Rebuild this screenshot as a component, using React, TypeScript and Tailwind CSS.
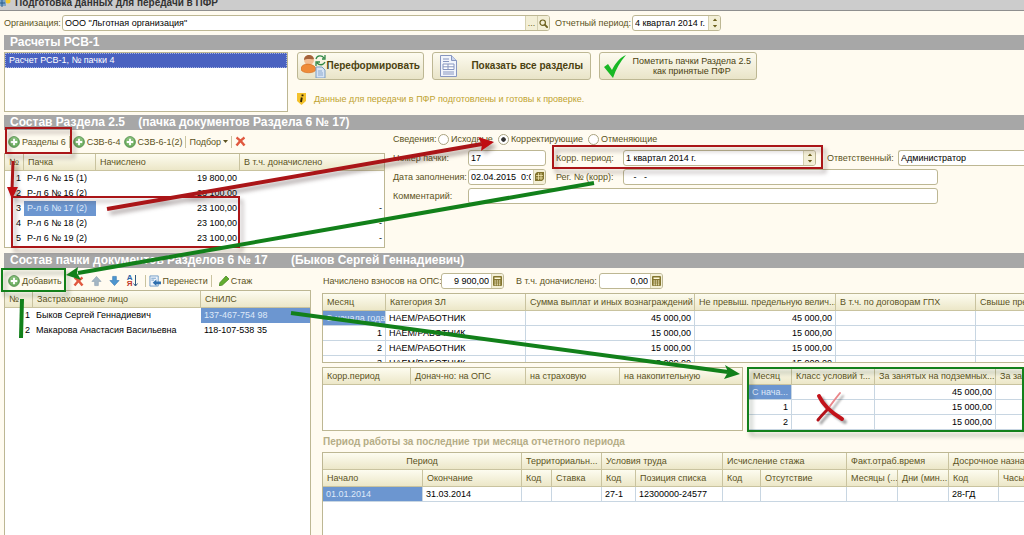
import type { ReactNode } from 'react';
import clsx from 'clsx';

type Column = { title: string; width: string; right?: boolean };

const packColumns: Column[] = [
  { title: '№', width: 'w-[19px]', right: true },
  { title: 'Пачка', width: 'w-[72px]' },
  { title: 'Начислено', width: 'w-[144px]', right: true },
  { title: 'В т.ч. доначислено', width: 'w-[145px]', right: true },
];

const packRows = [
  ['1', 'Р-л 6 № 15 (1)', '19 800,00', ''],
  ['2', 'Р-л 6 № 16 (2)', '23 100,00', ''],
  ['3', 'Р-л 6 № 17 (2)', '23 100,00', '-'],
  ['4', 'Р-л 6 № 18 (2)', '23 100,00', '-'],
  ['5', 'Р-л 6 № 19 (2)', '23 100,00', '-'],
];

const personColumns: Column[] = [
  { title: '№', width: 'w-[28px]', right: true },
  { title: 'Застрахованное лицо', width: 'w-[168px]' },
  { title: 'СНИЛС', width: 'w-[110px]' },
];

const personRows = [
  ['1', 'Быков Сергей Геннадиевич', '137-467-754 98'],
  ['2', 'Макарова Анастасия Васильевна', '118-107-538 35'],
];

const paymentColumns: Column[] = [
  { title: 'Месяц', width: 'w-[63px]', right: true },
  { title: 'Категория ЗЛ', width: 'w-[140px]' },
  { title: 'Сумма выплат и иных вознаграждений', width: 'w-[169px]', right: true },
  { title: 'Не превыш. предельную велич...', width: 'w-[141px]', right: true },
  { title: 'В т.ч. по договорам ГПХ', width: 'w-[140px]', right: true },
  { title: 'Свыше пред', width: 'w-[140px]', right: true },
];

const paymentRows = [
  ['С начала года', 'НАЕМ/РАБОТНИК', '45 000,00', '45 000,00', '', ''],
  ['1', 'НАЕМ/РАБОТНИК', '15 000,00', '15 000,00', '', ''],
  ['2', 'НАЕМ/РАБОТНИК', '15 000,00', '15 000,00', '', ''],
  ['3', 'НАЕМ/РАБОТНИК', '15 000,00', '15 000,00', '', ''],
];

const corrColumns: Column[] = [
  { title: 'Корр.период', width: 'w-[88px]' },
  { title: 'Донач-но: на ОПС', width: 'w-[115px]' },
  { title: 'на страховую', width: 'w-[94px]' },
  { title: 'на накопительную', width: 'w-[124px]' },
];

const tariffColumns: Column[] = [
  { title: 'Месяц', width: 'w-[43px]', right: true },
  { title: 'Класс условий т...', width: 'w-[83px]' },
  { title: 'За занятых на подземных...', width: 'w-[121px]', right: true },
  { title: 'За зан', width: 'w-[121px]', right: true },
];

const tariffRows = [
  ['С нача...', '', '45 000,00', ''],
  ['1', '', '15 000,00', ''],
  ['2', '', '15 000,00', ''],
];

const headCell =
  'h-[17px] overflow-hidden whitespace-nowrap border-r border-b border-[#c9c39f] bg-linear-to-b from-[#fdfcf0] to-[#ece7c8] px-1 font-normal leading-4 text-[#5c5322]';

function Grid({ columns, rows, selected, lines, label }: { columns: Column[]; rows: string[][]; selected?: string; lines?: boolean; label: string }) {
  return (
    <table aria-label={label} className="w-0 table-fixed border-separate border-spacing-0">
      <thead>
        <tr>
          {columns.map((c) => (
            <th key={c.title} className={clsx(headCell, 'text-left', c.width)}>{c.title}</th>
          ))}
        </tr>
      </thead>
      <tbody>
        {rows.map((row, r) => (
          <tr key={r}>
            {row.map((value, c) => (
              <td
                key={c}
                className={clsx(
                  'h-[15px] overflow-hidden whitespace-nowrap px-[3px] leading-[14px]',
                  lines ? 'border-r border-b border-[#c8d6e2]' : 'border-b border-transparent',
                  columns[c].right && 'text-right',
                  selected === `${r}:${c}` ? 'bg-[#6c96d0] text-[#dfe9f8]' : 'text-black',
                )}
              >
                {value}
              </td>
            ))}
          </tr>
        ))}
      </tbody>
    </table>
  );
}

function SectionBar({ children }: { children: ReactNode }) {
  return (
    <h2 className="h-[15px] overflow-hidden whitespace-pre bg-[#a7a7a7] pl-[6px] text-[12px] font-bold leading-[15px] text-white">
      {children}
    </h2>
  );
}

const fieldBox = 'flex h-4 items-stretch overflow-hidden rounded-[3px] border border-[#bdb793] bg-white';
const fieldInput = 'min-w-0 flex-1 bg-transparent px-[2px] text-black outline-none';
const fieldButton = 'flex w-3 shrink-0 items-center justify-center border-l border-[#d5d0b0] bg-[#f3efd6] text-[#6b5f1c]';

function Spinner() {
  return (
    <button type="button" aria-label="Изменить период" className={fieldButton}>
      <svg width="6" height="10" viewBox="0 0 6 10" fill="currentColor">
        <path d="M3 0.5 5.2 3H0.8zM3 9.5 0.8 7h4.4z" />
      </svg>
    </button>
  );
}

function Calculator() {
  return (
    <button type="button" aria-label="Калькулятор" className={fieldButton}>
      <svg width="9" height="10" viewBox="0 0 9 10">
        <rect width="9" height="10" rx="1" fill="#83752f" />
        <path d="M1.5 2.2h6" stroke="#fff9d8" strokeWidth="1.4" />
        <path d="M1.5 5h6M1.5 7h6M1.5 8.8h6" stroke="#fff9d8" strokeDasharray="1.4 .8" />
      </svg>
    </button>
  );
}

function PlusIcon() {
  return (
    <svg width="12" height="12" viewBox="0 0 12 12">
      <circle cx="6" cy="6" r="5.4" fill="#6fae62" stroke="#4c8a49" strokeWidth=".8" />
      <circle cx="6" cy="5" r="4" fill="#96c888" opacity=".6" />
      <path d="M6 2.8v6.4M2.8 6h6.4" stroke="#fff" strokeWidth="1.9" />
    </svg>
  );
}

function DeleteIcon() {
  return (
    <svg width="11" height="11" viewBox="0 0 11 11">
      <path d="M1.5 1.5c3 2 5.5 4.5 8 8M9.5 1.5c-3 2-5.5 4.5-8 8" stroke="#e0583f" strokeWidth="2.4" fill="none" />
    </svg>
  );
}

function ArrowIcon({ down }: { down?: boolean }) {
  return (
    <svg width="11" height="12" viewBox="0 0 12 12">
      <path
        d={down ? 'M4 1h4v4.5h3L6 11 1 5.5h3z' : 'M4 11h4V6.5h3L6 1 1 6.5h3z'}
        fill={down ? '#4d96cf' : '#a3b6c4'}
        stroke={down ? '#3579b4' : '#8da1b1'}
        strokeWidth=".7"
      />
    </svg>
  );
}

function Tool({ children }: { children: ReactNode }) {
  return <button type="button" className="flex shrink-0 items-center gap-[2px] whitespace-nowrap text-[#5c5322]">{children}</button>;
}

function Separator() {
  return <span className="h-3 border-l border-[#c9c39f]" />;
}

const bigButton =
  'flex h-7 shrink-0 items-center whitespace-nowrap rounded-[3px] border border-[#bdb793] bg-linear-to-b from-[#fdfbf0] to-[#e9e4c8] text-[#4b4210]';

// red and green marks drawn over the form
function Annotations() {
  return (
    <svg aria-hidden="true" className="pointer-events-none absolute top-0 left-0" width="1024" height="535" viewBox="0 0 1024 535" fill="none">
      <g className="drop-shadow-[3px_4px_2px_rgba(60,40,40,0.4)]" stroke="#aa1518" strokeWidth="2">
        <rect x="6" y="128" width="65" height="25" />
        <rect x="12" y="197" width="227" height="50" />
        <rect x="553" y="146" width="269" height="22" />
        <path d="M13 161 12 190" strokeWidth="3" />
        <path d="M7 187h11l-6 12z" fill="#c00d12" strokeWidth="0" />
        <path d="M107 209 482 144" strokeWidth="4" />
        <path d="M494 142 478 137l4 7-1 7z" fill="#c00d12" strokeWidth="0" />
      </g>
      <g stroke="#12801a">
        <g className="drop-shadow-[3px_4px_2px_rgba(40,60,40,0.4)]" strokeWidth="2">
          <rect x="2" y="269" width="63" height="22" />
          <rect x="748" y="368" width="275" height="63" />
        </g>
        <path d="M22 299 21 338" strokeWidth="4" />
        <path d="M594 183 78 273M291 313 728 372" strokeWidth="4" />
        <path d="M66 275 78 267l-1 6 4 7zM740 374 725 365l3 7-4 7z" fill="#12801a" strokeWidth="0" />
      </g>
      <g className="drop-shadow-[3px_3px_1px_rgba(0,0,0,0.35)]" strokeLinecap="round">
        <path d="M840 393C836 398 832 403 828 409" stroke="#e9868a" strokeWidth="2" />
        <path d="M828 409C824 413 821 416 818 420" stroke="#b3131b" strokeWidth="3" />
        <path d="M819 396C823 405 832 413 842 419" stroke="#c3131b" strokeWidth="4" />
      </g>
    </svg>
  );
}

const periodGroups = ['Период', 'Территориальн...', 'Условия труда', 'Исчисление стажа', 'Факт.отраб.время', 'Досрочное назнач'];

const periodColumns = [
  { title: 'Начало', width: 'w-[100px]', value: '01.01.2014' },
  { title: 'Окончание', width: 'w-[99px]', value: '31.03.2014' },
  { title: 'Код', width: 'w-[30px]', value: '' },
  { title: 'Ставка', width: 'w-[50px]', value: '' },
  { title: 'Код', width: 'w-[34px]', value: '27-1' },
  { title: 'Позиция списка', width: 'w-[87px]', value: '12300000-24577' },
  { title: 'Код', width: 'w-[38px]', value: '' },
  { title: 'Отсутствие', width: 'w-[86px]', value: '' },
  { title: 'Месяцы (...', width: 'w-[51px]', value: '' },
  { title: 'Дни (мин...', width: 'w-[51px]', value: '' },
  { title: 'Код', width: 'w-[50px]', value: '28-ГД' },
  { title: 'Часы', width: 'w-[60px]', value: '' },
];

export default function App() {
  return (
    <div className="relative flex min-h-screen flex-col overflow-hidden bg-[#fffbf0] font-['Liberation_Sans',sans-serif] text-[9px] leading-[14px] text-[#5c5322]">
      <header className="flex h-[11px] items-center gap-1 overflow-hidden border-b border-[#8f8f8f] bg-[#cccccc]">
        <svg width="11" height="10" viewBox="0 0 11 10">
          <path d="M0 0h6v6H0z" fill="#7ba4c8" />
          <path d="M2 0v7M0 3h5" stroke="#2b5f8c" />
          <circle cx="8" cy="1" r="2.5" fill="#f2c92e" />
        </svg>
        <h1 className="-mt-1 text-[10px] font-bold text-[#333]">Подготовка данных для передачи в ПФР</h1>
      </header>

      <div className="flex h-6 items-center pl-1">
        <label htmlFor="org" className="w-[58px]">Организация:</label>
        <div className={clsx(fieldBox, 'w-[488px]')}>
          <input id="org" className={fieldInput} defaultValue={'ООО "Льготная организация"'} />
          <button type="button" className={fieldButton}>...</button>
          <button type="button" aria-label="Открыть" className={fieldButton}>
            <svg width="9" height="9" viewBox="0 0 9 9" fill="none" stroke="currentColor" strokeWidth="1.2">
              <circle cx="3.7" cy="3.7" r="2.7" />
              <path d="m5.7 5.7 3 3" strokeWidth="1.8" />
            </svg>
          </button>
        </div>
        <label htmlFor="period" className="ml-[5px] w-[77px] whitespace-nowrap">Отчетный период:</label>
        <div className={clsx(fieldBox, 'w-[89px]')}>
          <input id="period" className={fieldInput} defaultValue="4 квартал 2014 г." />
          <Spinner />
        </div>
      </div>

      <main className="flex flex-1 flex-col pl-1">
        <SectionBar>Расчеты РСВ-1</SectionBar>
        <section className="flex h-[65px] items-start pt-[2px]">
          <ul className="h-[60px] w-[284px] shrink-0 border border-[#bdb793] bg-white">
            <li className="h-[15px] border border-dotted border-[#a9b6e0] bg-[#4a62c0] px-[3px] leading-[13px] text-white">Расчет РСВ-1, № пачки 4</li>
          </ul>
          <div className="ml-[9px]">
            <div className="flex gap-2">
              <button type="button" className={clsx(bigButton, 'w-[127px] justify-between px-[3px] text-[10px] font-bold')}>
                <svg width="25" height="24" viewBox="0 0 25 24">
                  <circle cx="8" cy="6" r="5" fill="#f3bd92" />
                  <path d="M3 6c0-6 9-7 10-1-3 1-6-1-10 1z" fill="#a4633c" />
                  <path d="M0 15c0-7 14-6 15 0 0 5-15 5-15 0z" fill="#ef8b39" stroke="#d06c20" strokeWidth=".6" />
                  <path d="M15 5c1-4 6-4 8-1m1-3v4h-3M24 8c-2 4-6 3-8 1m-1 3V8h4" fill="none" stroke="#328847" strokeWidth="1.3" />
                  <path d="M15 13h6l3 3v8h-9z" fill="#d6e3f4" stroke="#7b9dc5" />
                  <path d="M17 17h4M17 19h5M17 21h5" stroke="#7b9dc5" strokeWidth=".8" />
                </svg>
                Переформировать
              </button>
              <button type="button" className={clsx(bigButton, 'w-[159px] justify-between px-[7px] text-[10px] font-bold')}>
                <svg width="17" height="22" viewBox="0 0 17 22">
                  <path d="M.5.5h11l5 5v16H.5z" fill="#f2f5fc" stroke="#8796c0" />
                  <path d="M11.5.5v5h5" fill="#cbd5ee" stroke="#8796c0" />
                  <path d="M3 4h6M3 6.5h6M3 17h11M3 19h11" stroke="#8796c0" />
                  <path d="M3 9h11v5.5H3zM3 11.8h11M8 9v5.5" fill="#fff" stroke="#8796c0" />
                </svg>
                Показать все разделы
              </button>
              <button type="button" className={clsx(bigButton, 'w-[158px] justify-between pr-[5px] pl-[4px] leading-[10px]')}>
                <svg width="22" height="23" viewBox="0 0 22 23">
                  <path d="M0 12 4 9l4 6C11 9 15 3 22 0 16 7 12 14 9 23z" fill="#18b824" />
                </svg>
                <span className="text-center">Пометить пачки Раздела 2.5<br />как принятые ПФР</span>
              </button>
            </div>
            <p className="mt-3 flex items-center gap-2 text-[#c0a330]">
              <svg width="9" height="12" viewBox="0 0 9 12">
                <path d="M0 0h9v8L4.5 12 0 8z" fill="#f4c22c" />
                <path d="M5.5 1.5v1.8M4.8 4.5 4 9" stroke="#302504" strokeWidth="1.9" />
              </svg>
              Данные для передачи в ПФР подготовлены и готовы к проверке.
            </p>
          </div>
        </section>

        <SectionBar>{'Состав Раздела 2.5    (пачка документов Раздела 6 № 17)'}</SectionBar>
        <section className="flex h-[123px]">
          <div className="w-[381px] shrink-0">
            <div className="flex h-[23px] items-center gap-[3px] pl-1">
              <Tool><PlusIcon />Разделы 6</Tool>
              <Separator />
              <Tool><PlusIcon />СЗВ-6-4</Tool>
              <Tool><PlusIcon />СЗВ-6-1(2)</Tool>
              <Separator />
              <Tool>
                Подбор
                <svg width="5" height="3" viewBox="0 0 5 3" fill="currentColor"><path d="M0 0h5L2.5 3z" /></svg>
              </Tool>
              <Separator />
              <button type="button" aria-label="Удалить"><DeleteIcon /></button>
            </div>
            <div className="h-[95px] overflow-hidden border border-[#bdb793] bg-white">
              <Grid label="Пачки" columns={packColumns} rows={packRows} selected="2:1" />
            </div>
          </div>
          <form className="flex min-w-0 flex-1 flex-col pt-[2px] pl-2">
            <fieldset className="flex h-4 items-center">
              <legend className="sr-only">Сведения</legend>
              <span className="w-[45px]">Сведения:</span>
              {['Исходные', 'Корректирующие', 'Отменяющие'].map((kind) => (
                <label key={kind} className="mr-[5px] flex items-center gap-[2px]">
                  <input
                    type="radio"
                    name="kind"
                    defaultChecked={kind === 'Корректирующие'}
                    className="size-[11px] appearance-none rounded-full border border-[#a9a380] bg-white checked:bg-radial checked:from-[#333] checked:from-30% checked:to-white checked:to-40%"
                  />
                  {kind}
                </label>
              ))}
            </fieldset>
            <div className="flex h-[19px] items-center whitespace-nowrap">
              <label htmlFor="num" className="w-[75px]">Номер пачки:</label>
              <div className={clsx(fieldBox, 'w-[78px]')}><input id="num" className={fieldInput} defaultValue="17" /></div>
              <label htmlFor="corr" className="ml-[10px] w-[67px]">Корр. период:</label>
              <div className={clsx(fieldBox, 'w-[193px]')}>
                <input id="corr" className={fieldInput} defaultValue="1 квартал 2014 г." />
                <Spinner />
              </div>
              <label htmlFor="resp" className="ml-[11px] w-[71px]">Ответственный:</label>
              <div className={clsx(fieldBox, 'min-w-0 flex-1 rounded-r-none border-r-0')}><input id="resp" className={fieldInput} defaultValue="Администратор" /></div>
            </div>
            <div className="flex h-[19px] items-center whitespace-nowrap">
              <label htmlFor="date" className="w-[75px]">Дата заполнения:</label>
              <div className={clsx(fieldBox, 'w-[78px]')}>
                <input id="date" className={clsx(fieldInput, 'whitespace-pre')} defaultValue="02.04.2015  0:00" />
                <button type="button" aria-label="Календарь" className={fieldButton}>
                  <svg width="9" height="9" viewBox="0 0 9 9">
                    <path d="M2 0h7v7L7 9H0V2z" fill="#83752f" />
                    <path d="M1 3.5h7M1 6h7M3.5 1v7M6 1v7" stroke="#fff3bc" strokeWidth=".7" />
                  </svg>
                </button>
              </div>
              <label htmlFor="reg" className="ml-[10px] w-[67px]">Рег. № (корр):</label>
              <div className={clsx(fieldBox, 'w-[315px]')}><input id="reg" className={clsx(fieldInput, 'whitespace-pre')} defaultValue="   -   -" /></div>
            </div>
            <div className="flex h-[19px] items-center whitespace-nowrap">
              <label htmlFor="comment" className="w-[75px]">Комментарий:</label>
              <div className={clsx(fieldBox, 'w-[470px]')}><input id="comment" className={fieldInput} /></div>
            </div>
          </form>
        </section>

        <SectionBar>{'Состав пачки документов Разделов 6 № 17       (Быков Сергей Геннадиевич)'}</SectionBar>
        <section className="flex flex-1">
          <div className="flex w-[307px] shrink-0 flex-col">
            <div className="flex h-[22px] items-center gap-[7px] pt-[4px] pl-1">
              <Tool><PlusIcon />Добавить</Tool>
              <button type="button" aria-label="Удалить" className="ml-1"><DeleteIcon /></button>
              <button type="button" aria-label="Вверх"><ArrowIcon /></button>
              <button type="button" aria-label="Вниз"><ArrowIcon down /></button>
              <button type="button" aria-label="Сортировать" className="flex items-center">
                <span className="text-[8px] font-bold leading-[6px]"><span className="block text-[#2b63a8]">А</span><span className="block text-[#c0392b]">Я</span></span>
                <svg width="5" height="12" viewBox="0 0 5 12" fill="none" stroke="#2d587f"><path d="M2.5 0v11M.5 8.5l2 2.5 2-2.5" /></svg>
              </button>
              <div className="flex items-center gap-[3px]">
                <Separator />
                <Tool>
                  <svg width="12" height="12" viewBox="0 0 13 12">
                    <path d="M1 .5h9v11H1z" fill="#eef4fb" stroke="#6f9bc6" />
                    <path d="M2.5 3h5M2.5 5h3" stroke="#6f9bc6" />
                    <path d="M13 6.5H8V4.5L4 8l4 3.5v-2h5z" fill="#2e6fae" />
                  </svg>
                  Перенести
                </Tool>
                <Separator />
              </div>
              <Tool>
                <svg width="10" height="10" viewBox="0 0 10 10"><path d="M0 10 1 6.5 7 0l3 3-6.5 6z" fill="#63ad2f" stroke="#3d7f1b" strokeWidth=".7" /></svg>
                Стаж
              </Tool>
            </div>
            <div className="flex-1 overflow-hidden border border-b-0 border-[#bdb793] bg-white">
              <Grid label="Застрахованные лица" columns={personColumns} rows={personRows} selected="0:2" />
            </div>
          </div>

          <div className="ml-[11px] flex min-w-0 flex-1 flex-col">
            <div className="flex h-[25px] items-center pl-px">
              <label htmlFor="ops" className="w-[118px] whitespace-nowrap">Начислено взносов на ОПС:</label>
              <div className={clsx(fieldBox, 'w-[63px]')}>
                <input id="ops" className={clsx(fieldInput, 'text-right')} defaultValue="9 900,00" />
                <Calculator />
              </div>
              <label htmlFor="extra" className="ml-3 w-[83px] whitespace-nowrap">В т.ч. доначислено:</label>
              <div className={clsx(fieldBox, 'w-[64px]')}>
                <input id="extra" className={clsx(fieldInput, 'text-right')} defaultValue="0,00" />
                <Calculator />
              </div>
            </div>
            <div className="h-[70px] overflow-hidden border border-r-0 border-[#bdb793] bg-white">
              <Grid label="Выплаты" columns={paymentColumns} rows={paymentRows} selected="0:0" lines />
            </div>
            <div className="mt-1 flex gap-[5px]">
              <div className="h-16 w-[421px] shrink-0 overflow-hidden border border-[#bdb793] bg-white">
                <Grid label="Корректировки" columns={corrColumns} rows={[]} />
              </div>
              <div className="h-16 min-w-0 flex-1 overflow-hidden border border-[#bdb793] bg-white">
                <Grid label="Дополнительный тариф" columns={tariffColumns} rows={tariffRows} selected="0:0" lines />
              </div>
            </div>
            <h3 className="h-[21px] pl-px text-[10px] font-bold leading-[21px] text-[#b5ad86]">Период работы за последние три месяца отчетного периода</h3>
            <div className="flex-1 overflow-hidden border border-r-0 border-b-0 border-[#bdb793] bg-white">
              <table aria-label="Период работы" className="w-0 table-fixed border-separate border-spacing-0">
                <colgroup>
                  {periodColumns.map((c, i) => (
                    <col key={i} className={c.width} />
                  ))}
                </colgroup>
                <thead>
                  <tr>
                    {periodGroups.map((title, i) => (
                      <th key={title} colSpan={2} className={clsx(headCell, i === 0 ? 'text-center' : 'text-left')}>{title}</th>
                    ))}
                  </tr>
                  <tr>
                    {periodColumns.map((c, i) => (
                      <th key={i} className={clsx(headCell, 'text-left')}>{c.title}</th>
                    ))}
                  </tr>
                </thead>
                <tbody>
                  <tr>
                    {periodColumns.map((c, i) => (
                      <td
                        key={i}
                        className={clsx(
                          'h-[15px] whitespace-nowrap border-r border-b border-[#c8d6e2] px-[3px] leading-[14px]',
                          i === 0 ? 'bg-[#6c96d0] text-[#dfe9f8]' : 'text-black',
                        )}
                      >
                        {c.value}
                      </td>
                    ))}
                  </tr>
                </tbody>
              </table>
            </div>
          </div>
        </section>
      </main>
      <Annotations />
    </div>
  );
}
